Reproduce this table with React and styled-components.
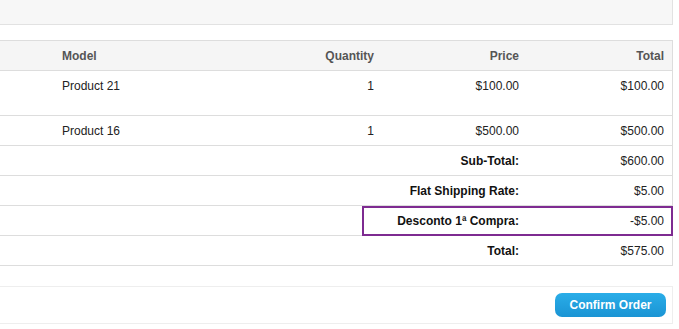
import React from 'react';
import styled, { createGlobalStyle } from 'styled-components';

const items = [
  { model: 'Product 21', qty: 1, price: '$100.00', total: '$100.00', extra: true },
  { model: 'Product 16', qty: 1, price: '$500.00', total: '$500.00' },
];

const totals = [
  { label: 'Sub-Total:', value: '$600.00' },
  { label: 'Flat Shipping Rate:', value: '$5.00' },
  { label: 'Desconto 1ª Compra:', value: '-$5.00', marked: true },
  { label: 'Total:', value: '$575.00' },
];

const App = () => {
  return (
    <>
      <GlobalStyle />
      <Page>
        <TopBox />

        <Table>
          <HeadRow>
            <HeadCell />
            <HeadCell>Model</HeadCell>
            <HeadCell right>Quantity</HeadCell>
            <HeadCell right>Price</HeadCell>
            <HeadCell right>Total</HeadCell>
          </HeadRow>

          {items.map((item) => (
            <Row key={item.model}>
              <Cell />
              <Cell>
                {item.model}
                {item.extra && <OptionLine />}
              </Cell>
              <Cell right>{item.qty}</Cell>
              <Cell right>{item.price}</Cell>
              <Cell right>{item.total}</Cell>
            </Row>
          ))}

          {totals.map((t) => (
            <Row key={t.label}>
              <LabelCell>{t.label}</LabelCell>
              <Cell right>{t.value}</Cell>
              {t.marked && <Highlight />}
            </Row>
          ))}
        </Table>

        <Footer>
          <ConfirmButton>Confirm Order</ConfirmButton>
        </Footer>
      </Page>
    </>
  );
};

export default App;

const GlobalStyle = createGlobalStyle`
  html, body {
    margin: 0;
    padding: 0;
    background: #fff;
    overflow: hidden;
  }
  body {
    font-family: "Liberation Sans", Arial, sans-serif;
    font-size: 12px;
    color: #222;
  }
`;

const Page = styled.div`
  width: 713px;
  margin-left: -40px;
`;

const TopBox = styled.div`
  height: 24px;
  background: #f7f7f7;
  border-right: 1px solid #e2e2e2;
  border-bottom: 1px solid #e2e2e2;
`;

const Table = styled.div`
  margin-top: 15px;
  border-top: 1px solid #dddddd;
  border-right: 1px solid #dddddd;
`;

const Row = styled.div`
  position: relative;
  display: grid;
  grid-template-columns: 95px 1fr 82px 145px 145px;
  border-bottom: 1px solid #dddddd;
`;

const HeadRow = styled(Row)`
  background: #f5f5f5;
`;

const Cell = styled.div`
  padding: 7px 8px 6px 7px;
  line-height: 16px;
  text-align: ${(p) => (p.right ? 'right' : 'left')};
  color: #222;
`;

const HeadCell = styled(Cell)`
  font-weight: bold;
  color: #555;
`;

const LabelCell = styled(Cell)`
  grid-column: 1 / 5;
  text-align: right;
  font-weight: bold;
  color: #111;
`;

const OptionLine = styled.div`
  height: 15px;
`;

const Highlight = styled.span`
  position: absolute;
  top: 0;
  bottom: -1px;
  right: -1px;
  width: 307px;
  border: 2px solid #7e2b91;
  pointer-events: none;
`;

const Footer = styled.div`
  margin-top: 20px;
  padding: 6px 6px 6px 0;
  display: flex;
  justify-content: flex-end;
  border: 1px solid #eeeeee;
  border-left: none;
`;

const ConfirmButton = styled.button`
  width: 111px;
  height: 24px;
  padding: 0;
  border: none;
  border-radius: 7px;
  background: linear-gradient(to bottom, #2aade8, #1a94d4);
  color: #fff;
  font-family: "Liberation Sans", Arial, sans-serif;
  font-size: 12px;
  font-weight: bold;
  cursor: pointer;
`;
